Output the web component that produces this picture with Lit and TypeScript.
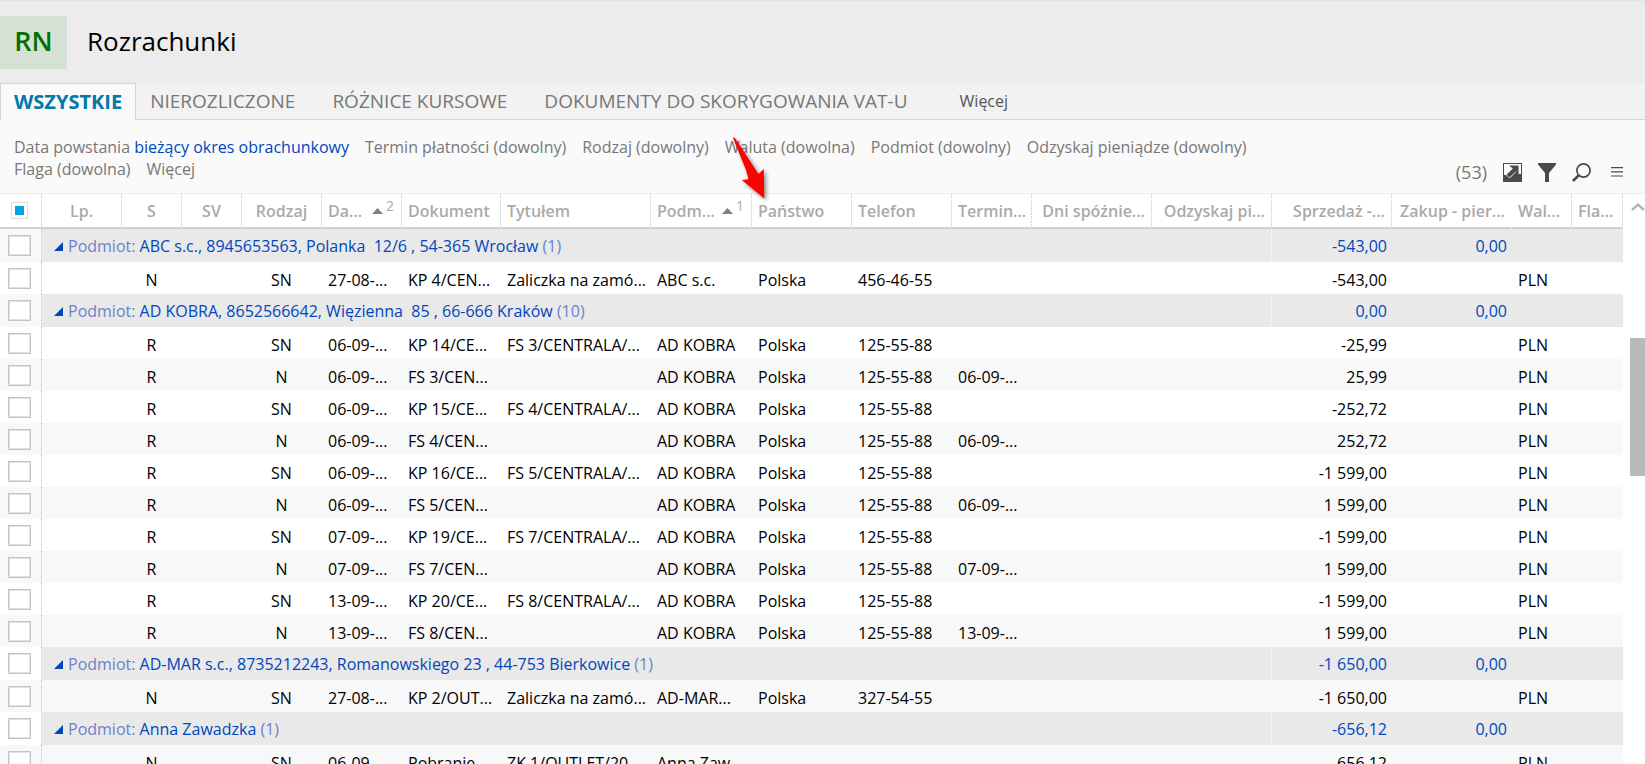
import { LitElement, html, css } from "lit";
import { customElement } from "lit/decorators.js";

type Align = "c" | "l" | "r";
interface Column { label: string; width: number; align: Align; sort?: string; plain?: boolean; }
interface Entry { s: string; kind: string; date: string; doc: string; title: string; subject: string; country: string; phone: string; due: string; sale: string; }
interface Group { name: string; count: number; sale: string; purchase: string; rows: Entry[]; }

const columns: Column[] = [
  { label: "Lp.", width: 80, align: "c" },
  { label: "S", width: 60, align: "c" },
  { label: "SV", width: 60, align: "c" },
  { label: "Rodzaj", width: 80, align: "c" },
  { label: "Da...", width: 80, align: "l", sort: "2" },
  { label: "Dokument", width: 99, align: "l" },
  { label: "Tytułem", width: 150, align: "l" },
  { label: "Podm...", width: 101, align: "l", sort: "1" },
  { label: "Państwo", width: 100, align: "l" },
  { label: "Telefon", width: 100, align: "l" },
  { label: "Termin...", width: 80, align: "l" },
  { label: "Dni spóźnie...", width: 120, align: "r" },
  { label: "Odzyskaj pi...", width: 120, align: "r" },
  { label: "Sprzedaż -...", width: 120, align: "r" },
  { label: "Zakup - pier...", width: 120, align: "r", plain: true },
  { label: "Wal...", width: 60, align: "l" },
  { label: "Fla...", width: 51, align: "l" },
];

const kobra = (kind: string, date: string, doc: string, title: string, due: string, sale: string): Entry =>
  ({ s: "R", kind, date, doc, title, subject: "AD KOBRA", country: "Polska", phone: "125-55-88", due, sale });

const groups: Group[] = [
  { name: "ABC s.c., 8945653563, Polanka  12/6 , 54-365 Wrocław", count: 1, sale: "-543,00", purchase: "0,00", rows: [
    { s: "N", kind: "SN", date: "27-08-...", doc: "KP 4/CEN...", title: "Zaliczka na zamó...", subject: "ABC s.c.", country: "Polska", phone: "456-46-55", due: "", sale: "-543,00" },
  ] },
  { name: "AD KOBRA, 8652566642, Więzienna  85 , 66-666 Kraków", count: 10, sale: "0,00", purchase: "0,00", rows: [
    kobra("SN", "06-09-...", "KP 14/CE...", "FS 3/CENTRALA/...", "", "-25,99"),
    kobra("N", "06-09-...", "FS 3/CEN...", "", "06-09-...", "25,99"),
    kobra("SN", "06-09-...", "KP 15/CE...", "FS 4/CENTRALA/...", "", "-252,72"),
    kobra("N", "06-09-...", "FS 4/CEN...", "", "06-09-...", "252,72"),
    kobra("SN", "06-09-...", "KP 16/CE...", "FS 5/CENTRALA/...", "", "-1 599,00"),
    kobra("N", "06-09-...", "FS 5/CEN...", "", "06-09-...", "1 599,00"),
    kobra("SN", "07-09-...", "KP 19/CE...", "FS 7/CENTRALA/...", "", "-1 599,00"),
    kobra("N", "07-09-...", "FS 7/CEN...", "", "07-09-...", "1 599,00"),
    kobra("SN", "13-09-...", "KP 20/CE...", "FS 8/CENTRALA/...", "", "-1 599,00"),
    kobra("N", "13-09-...", "FS 8/CEN...", "", "13-09-...", "1 599,00"),
  ] },
  { name: "AD-MAR s.c., 8735212243, Romanowskiego 23 , 44-753 Bierkowice", count: 1, sale: "-1 650,00", purchase: "0,00", rows: [
    { s: "N", kind: "SN", date: "27-08-...", doc: "KP 2/OUT...", title: "Zaliczka na zamó...", subject: "AD-MAR...", country: "Polska", phone: "327-54-55", due: "", sale: "-1 650,00" },
  ] },
  { name: "Anna Zawadzka", count: 1, sale: "-656,12", purchase: "0,00", rows: [
    { s: "N", kind: "SN", date: "06-09-...", doc: "Pobranie...", title: "ZK 1/OUTLET/20...", subject: "Anna Zaw...", country: "", phone: "", due: "", sale: "-656,12" },
  ] },
];

const tabs = ["NIEROZLICZONE", "RÓŻNICE KURSOWE", "DOKUMENTY DO SKORYGOWANIA VAT-U"];
const filters = ["Termin płatności (dowolny)", "Rodzaj (dowolny)", "Waluta (dowolna)", "Podmiot (dowolny)", "Odzyskaj pieniądze (dowolny)", "Flaga (dowolna)", "Więcej"];

@customElement("app-root")
export class AppRoot extends LitElement {
  static styles = css`
    :host { display: flex; flex-direction: column; height: 100vh; overflow: hidden; position: relative; box-sizing: border-box;
      background: #fff; color: #000; font: 16px/22px "Open Sans", "Noto Sans", sans-serif; }
    * { box-sizing: border-box; }
    button { font: inherit; color: inherit; background: none; border: 0; padding: 0; margin: 0; }
    a { color: inherit; text-decoration: none; white-space: nowrap; }
    svg { display: block; }
    .head { display: flex; align-items: center; gap: 20px; flex: none; height: 83px; background: #ececec; border-top: 1px solid #e2e2e2; }
    .badge { display: flex; align-items: center; justify-content: center; width: 67px; height: 53px; padding-bottom: 2px; background: #d5e1d5; color: #007000; font-size: 27px; font-weight: 600; }
    h1 { margin: 0; padding-bottom: 2px; font-size: 26px; line-height: 36px; font-weight: 400; }
    .tabs { display: flex; flex: none; height: 37px; background: #f2f2f2; border-bottom: 1px solid #d4d4d4; color: #777; font-size: 19px; }
    .tab { padding: 0 14px; margin-right: 9px; white-space: nowrap; }
    .tab.active { margin: 0 0 -1px; padding: 0 13px; background: #fafafa; border: 1px solid #d4d4d4; border-bottom: 0; color: #0078aa; font-size: 20px; font-weight: 700; }
    .tab.more { font-size: 16px; color: #555; margin-left: 15px; }
    .bar { display: flex; align-items: flex-end; justify-content: space-between; flex: none; background: #fafafa; padding: 16px 22px 10px 14px; border-bottom: 1px solid #eee; }
    .filters { display: flex; flex-wrap: wrap; column-gap: 16px; max-width: 1270px; padding-bottom: 3px; color: #777; }
    .link { color: #0046be; }
    .tools { display: flex; align-items: center; gap: 16px; color: #4a4a4a; }
    .count { font-size: 18px; color: #777; }
    .menu { margin-left: 4px; }
    .main { display: flex; flex: 1; min-height: 0; }
    .grid { flex: 1; min-width: 0; overflow: hidden; }
    table { width: 100%; table-layout: fixed; border-collapse: separate; border-spacing: 0; }
    th, td { padding: 0 0 0 6px; white-space: nowrap; text-align: left; }
    th { height: 35px; color: #aaa; font-weight: 600; border-bottom: 2px solid #d0d0d0; border-right: 1px dotted #c4c4c4; }
    th.plain { border-right-color: transparent; }
    td { height: 32px; padding-top: 4px; border-right: 1px solid transparent; }
    .c { text-align: center; padding: 0; }
    td.c { padding-top: 4px; }
    .r { text-align: right; padding-right: 4px; }
    th.r { padding-right: 6px; }
    .check { padding: 0 0 0 8px; border-right: 1px dotted #c4c4c4; }
    input { display: block; appearance: none; margin: 0; width: 23px; height: 21px; background: #fff; border: 1px solid #c4c4c4; box-shadow: inset 0 0 0 1px #e2e2e2; }
    .all { width: 17px; height: 17px; margin-left: 3px; border-color: #ddd; background: #00a2e0; box-shadow: inset 0 0 0 3px #fff; }
    tbody tr:nth-child(odd) td { background: #f8f8f8; }
    tbody .group td { height: 33px; padding-top: 0; color: #0046be; }
    tbody .group td:not(.check) { background: #e9e9e9; }
    .caption { display: flex; align-items: center; gap: 5px; padding-left: 6px; white-space: pre; }
    .caption svg { margin-top: 2px; }
    .group .label { border-right-color: #f2f2f2; }
    .dim { color: #6b82cc; }
    .sorted { display: flex; align-items: center; gap: 3px; padding-right: 7px; }
    .sorted span { flex: 1; }
    .order { align-self: flex-start; font-size: 14px; line-height: 12px; font-weight: 400; }
    .scroll { flex: none; width: 22px; display: flex; flex-direction: column; align-items: flex-end; padding-top: 9px; }
    .thumb { width: 15px; height: 138px; margin-top: 127px; background: #b9b9b9; }
    .arrow { position: absolute; left: 724px; top: 130px; pointer-events: none; filter: drop-shadow(2px 2px 2px rgba(0, 0, 0, 0.45)); }
  `;

  private head(c: Column) {
    return html`<th class="${c.align} ${c.plain ? "plain" : ""}">${c.sort
      ? html`<div class="sorted"><span>${c.label}</span><svg width="11" height="6" fill="#808080"><path d="M0 6L5.5 0L11 6z"/></svg><div class="order">${c.sort}</div></div>`
      : c.label}</th>`;
  }

  private entry(r: Entry) {
    const cells = ["", r.s, "", r.kind, r.date, r.doc, r.title, r.subject, r.country, r.phone, r.due, "", "", r.sale, "", "PLN", ""];
    return html`<tr>
      <td class="check"><input type="checkbox" aria-label=${r.doc}></td>
      ${cells.map((t, k) => html`<td class=${columns[k].align}>${t}</td>`)}
    </tr>`;
  }

  private group(g: Group) {
    return html`<tr class="group">
      <td class="check"><input type="checkbox" aria-label=${g.name}></td>
      <td class="label" colspan="13"><div class="caption"><svg width="9" height="9" fill="#0046be"><path d="M9 0V9H0z"/></svg><div><span class="dim">Podmiot:</span> ${g.name} <span class="dim">(${g.count})</span></div></div></td>
      <td class="r">${g.sale}</td><td class="r">${g.purchase}</td><td colspan="2"></td>
    </tr>${g.rows.map((r) => this.entry(r))}`;
  }

  render() {
    return html`
      <header class="head"><div class="badge">RN</div><h1>Rozrachunki</h1></header>
      <nav class="tabs">
        <button class="tab active">WSZYSTKIE</button>${tabs.map((t) => html`<button class="tab">${t}</button>`)}<button class="tab more">Więcej</button>
      </nav>
      <div class="bar">
        <div class="filters"><a href="#">Data powstania <span class="link">bieżący okres obrachunkowy</span></a>${filters.map((f) => html`<a href="#">${f}</a>`)}</div>
        <div class="tools">
          <span class="count">(53)</span>
          <button aria-label="Eksport"><svg width="19" height="19" fill="currentColor"><path fill-rule="evenodd" d="M0 0H19V19H0zM1 1V12H3L5 14L7 15L15 7V11H18V1z"/><path d="M6 2.5H15.5V11L12.7 8.4L6.4 14.4L3.6 11.8L9.8 5.6z"/></svg></button>
          <button aria-label="Filtr"><svg width="18" height="19" fill="currentColor"><path d="M0 0H18V1.5L11 10V19H7V10L0 1.5z"/></svg></button>
          <button aria-label="Szukaj"><svg width="19" height="19" fill="none" stroke="currentColor"><circle cx="11.5" cy="7.5" r="6.6" stroke-width="1.7"/><path d="M6.8 12.2L.9 18" stroke-width="2.6"/></svg></button>
          <button class="menu" aria-label="Menu"><svg width="12" height="10" fill="currentColor"><path d="M0 0H12V1.2H0zM0 4.2H12V5.4H0zM0 8.4H12V9.6H0z"/></svg></button>
        </div>
      </div>
      <div class="main">
        <div class="grid"><table>
          <colgroup><col style="width:42px">${columns.map((c) => html`<col style="width:${c.width}px">`)}</colgroup>
          <thead><tr><th class="check"><input class="all" type="checkbox" aria-label="Wszystkie"></th>${columns.map((c) => this.head(c))}</tr></thead>
          <tbody>${groups.map((g) => this.group(g))}</tbody>
        </table></div>
        <div class="scroll">
          <svg width="14" height="8" fill="none" stroke="#b4b4b4" stroke-width="2.4"><path d="M1 7L7 1.6L13 7"/></svg>
          <div class="thumb"></div>
        </div>
      </div>
      <svg class="arrow" width="50" height="76" fill="#f00"><path d="M9 8C10 7 11 8 11.8 9.2L34.5 44L39.8 39L40.3 68.5L17.8 50L24.5 49.3L22 40z"/></svg>`;
  }
}
